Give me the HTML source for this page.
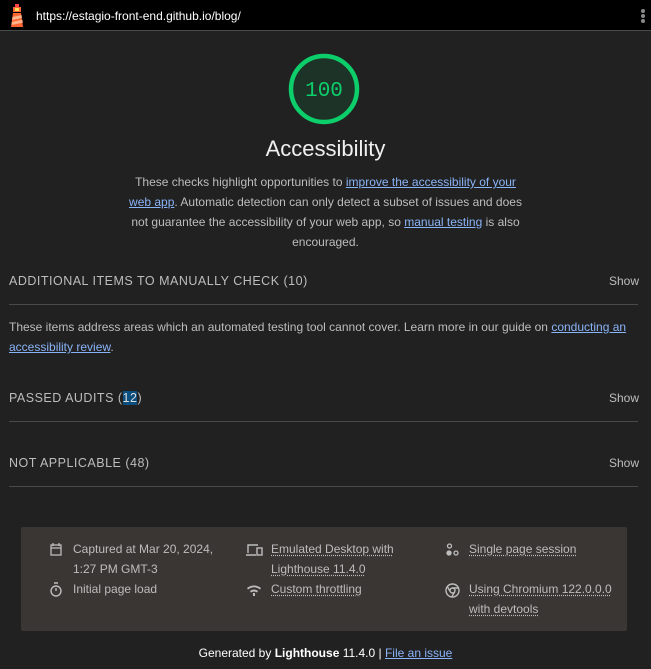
<!DOCTYPE html>
<html><head><meta charset="utf-8"><style>
*{margin:0;padding:0;box-sizing:border-box}
body{width:651px;height:669px;background:#212121;font-family:"Liberation Sans",sans-serif;color:#bdbdbd;font-size:12px;overflow:hidden;position:relative}
.top{position:absolute;left:0;top:0;width:651px;height:31px;background:#000;border-bottom:1px solid #4a4a4a}
.url{position:absolute;left:36px;top:9px;color:#fff;font-size:12px}
.abs{position:absolute}
a{color:#8ab4f8;text-decoration:underline}
.desc{position:absolute;left:125px;width:401px;top:172px;text-align:center;line-height:20px;color:#bdbdbd}
.hd{position:absolute;left:9px;font-size:12.5px;letter-spacing:0.5px;color:#bdbdbd}
.show{position:absolute;right:12px;color:#bdbdbd;font-size:12px}
.ln{position:absolute;left:9px;width:629px;height:1px;background:#4a4a4a}
.box{position:absolute;left:21px;top:527px;width:606px;height:104px;background:#3a3634;border-radius:2px}
.it{position:absolute;line-height:20px;color:#bdbdbd}
.it u{text-decoration:underline dotted;text-underline-offset:2px}
svg.ic{position:absolute}
</style></head><body>
<div class="top">
<svg class="abs" style="left:9px;top:4px" width="16" height="24" viewBox="0 0 16 24"><rect x="6" y="0" width="4" height="3" fill="#f44"/><rect x="4" y="3" width="8" height="5" fill="#f63"/><rect x="6" y="4" width="4" height="3" fill="#fd5"/><path d="M4 9h8l2 14H2z" fill="#f63"/><path d="M3.5 13l9-2 .5 3-10 2z M2.8 18l10.6-2.2.4 3L2.4 21z" fill="#ffb38a"/></svg>
<div class="url">https://estagio-front-end.github.io/blog/</div>
<div class="abs" style="left:641px;top:9px;width:4px;height:4px;border-radius:2px;background:#888"></div>
<div class="abs" style="left:641px;top:14px;width:4px;height:4px;border-radius:2px;background:#888"></div>
<div class="abs" style="left:641px;top:19px;width:4px;height:4px;border-radius:2px;background:#888"></div>
</div>
<svg class="abs" style="left:288px;top:53px" width="72" height="72"><circle cx="36" cy="36" r="33" fill="#1e3327" stroke="#0cce6b" stroke-width="4.5"/><text x="36" y="43" text-anchor="middle" font-family="Liberation Mono,monospace" font-size="21" fill="#0cce6b">100</text></svg>
<div class="abs" style="left:0;width:651px;top:136px;text-align:center;font-size:22px;color:#f0f0f0">Accessibility</div>
<div class="desc">These checks highlight opportunities to <a>improve the accessibility of your web app</a>. Automatic detection can only detect a subset of issues and does not guarantee the accessibility of your web app, so <a>manual testing</a> is also encouraged.</div>
<div class="hd" style="top:274px">ADDITIONAL ITEMS TO MANUALLY CHECK (10)</div><div class="show" style="top:274px">Show</div>
<div class="ln" style="top:304px"></div>
<div class="abs" style="left:9px;top:317px;width:630px;line-height:20px">These items address areas which an automated testing tool cannot cover. Learn more in our guide on <a>conducting an accessibility review</a>.</div>
<div class="hd" style="top:391px">PASSED AUDITS (<span style="background:#0b4f80;color:#ddd">12</span>)</div><div class="show" style="top:391px">Show</div>
<div class="ln" style="top:421px"></div>
<div class="hd" style="top:456px">NOT APPLICABLE (48)</div><div class="show" style="top:456px">Show</div>
<div class="ln" style="top:486px"></div>
<div class="box"></div>
<svg class="ic" style="left:50px;top:543px" width="12" height="13" viewBox="0 0 12 13" fill="none" stroke="#bdbdbd" stroke-width="1.3"><rect x="1" y="2" width="10" height="10"/><path d="M1 5h10M3 0v3M9 0v3"/></svg>
<div class="it" style="left:73px;top:539px">Captured at Mar 20, 2024,<br>1:27 PM GMT-3</div>
<svg class="ic" style="left:50px;top:582px" width="12" height="15" viewBox="0 0 12 15" fill="none" stroke="#bdbdbd" stroke-width="1.4"><circle cx="6" cy="9" r="5"/><path d="M4 1h4M6 9V6"/></svg>
<div class="it" style="left:73px;top:579px">Initial page load</div>
<svg class="ic" style="left:246px;top:544px" width="17" height="12" viewBox="0 0 17 12" fill="none" stroke="#bdbdbd" stroke-width="1.4"><path d="M2 9V1h10M0 11h10"/><rect x="11" y="4" width="5" height="7"/></svg>
<div class="it" style="left:271px;top:539px"><u>Emulated Desktop with<br>Lighthouse 11.4.0</u></div>
<svg class="ic" style="left:246px;top:584px" width="16" height="12" viewBox="0 0 16 12" fill="#bdbdbd"><path d="M1 4Q8-1 15 4l-1 1.5Q8 1 2 5.5z M4 7q4-3 8 0l-1 1.5q-3-2-6 0z M7 9h2v3H7z"/></svg>
<div class="it" style="left:271px;top:579px"><u>Custom throttling</u></div>
<svg class="ic" style="left:446px;top:543px" width="13" height="14" viewBox="0 0 13 14" fill="none" stroke="#bdbdbd" stroke-width="1.3"><circle cx="3.5" cy="3" r="2"/><circle cx="3" cy="10" r="2" fill="#bdbdbd"/><circle cx="10" cy="10" r="2"/></svg>
<div class="it" style="left:469px;top:539px"><u>Single page session</u></div>
<svg class="ic" style="left:445px;top:583px" width="15" height="15" viewBox="0 0 15 15" fill="none" stroke="#bdbdbd" stroke-width="1.4"><circle cx="7.5" cy="7.5" r="6.5"/><circle cx="7.5" cy="7.5" r="2.5"/><path d="M7.5 5h6M5.3 8.8L2.3 3.5M9.7 8.8L6.7 14"/></svg>
<div class="it" style="left:469px;top:579px"><u>Using Chromium 122.0.0.0<br>with devtools</u></div>
<div class="abs" style="left:0;width:651px;top:646px;text-align:center;color:#fff">Generated by <b>Lighthouse</b> 11.4.0 | <a>File an issue</a></div>
</body></html>
